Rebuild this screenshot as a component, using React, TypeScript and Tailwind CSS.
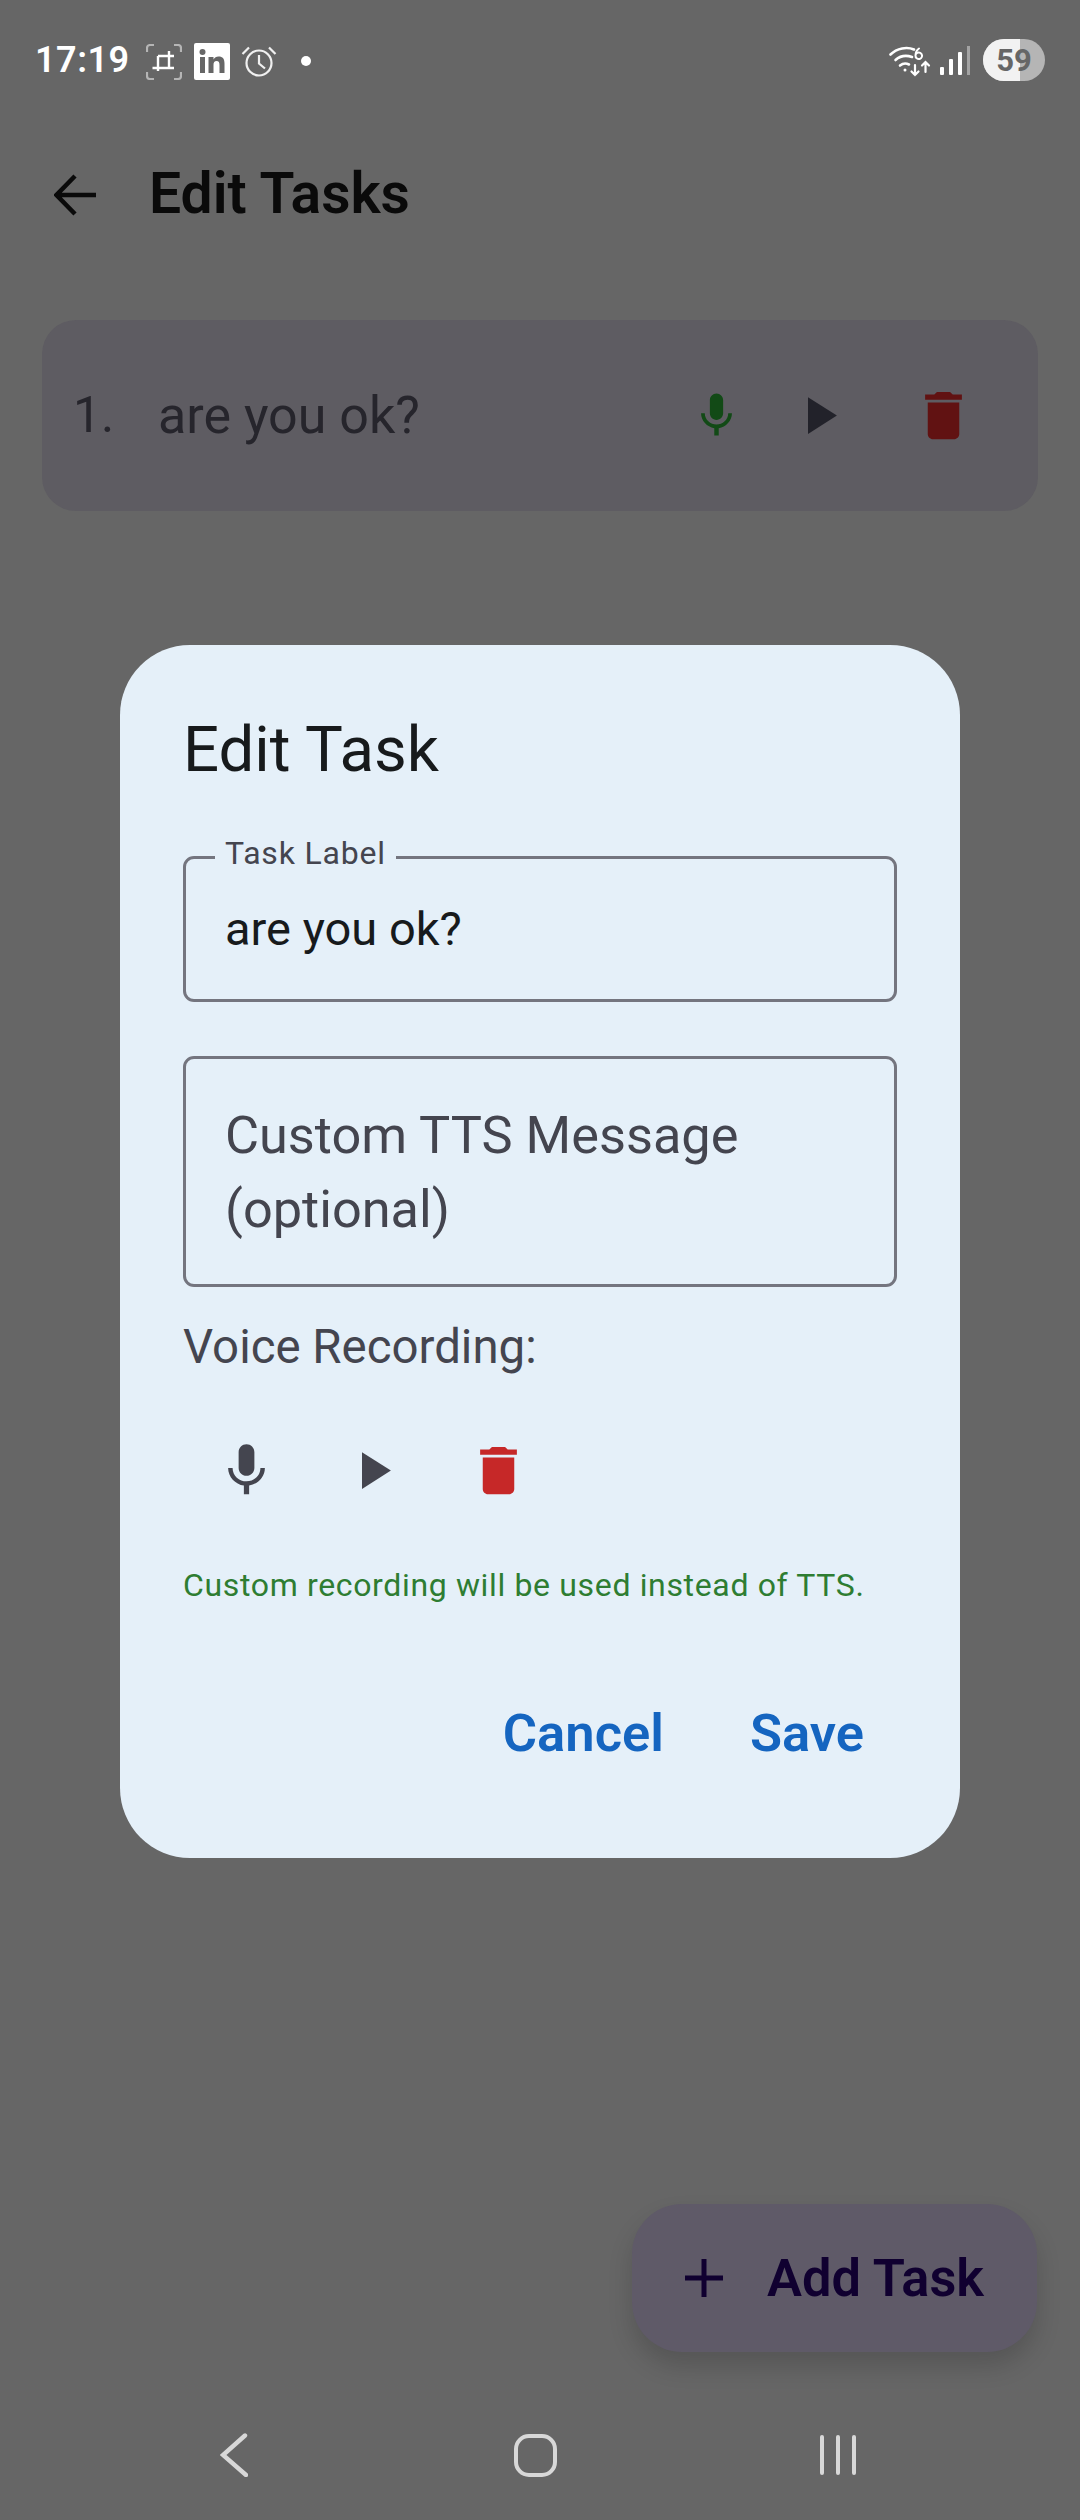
const F = { fontFamily: "Roboto, sans-serif" };

function Mic({ className }: { className: string }) {
  return (
    <svg viewBox="0 0 24 24" fill="currentColor" className={className}>
      <path d="M12 14c1.66 0 3-1.34 3-3V5c0-1.66-1.34-3-3-3S9 3.34 9 5v6c0 1.66 1.34 3 3 3zm5.3-3c0 3-2.54 5.1-5.3 5.1S6.7 14 6.7 11H5c0 3.41 2.72 6.23 6 6.72V21h2v-3.28c3.28-.48 6-3.3 6-6.72h-1.7z" />
    </svg>
  );
}
function Play({ className }: { className: string }) {
  return (
    <svg viewBox="0 0 24 24" fill="currentColor" className={className}>
      <path d="M8 5v14l11-7z" />
    </svg>
  );
}
function Trash({ className }: { className: string }) {
  return (
    <svg viewBox="0 0 24 24" fill="currentColor" className={className}>
      <path d="M6 19c0 1.1.9 2 2 2h8c1.1 0 2-.9 2-2V7H6v12zM19 4h-3.5l-1-1h-5l-1 1H5v2h14V4z" />
    </svg>
  );
}

function StatusBar() {
  return (
    <div className="h-[120px] flex items-start text-white shrink-0">
      <div className="ml-[35px] mt-[38px] w-[91px] text-[36px] leading-[44px] font-semibold tracking-[0.5px]">17:19</div>
      <svg viewBox="0 0 36 36" className="ml-[20px] mt-[44px] w-[36px] h-[36px]" fill="none">
        <path d="M1 8V4a3 3 0 0 1 3-3h4M28 1h4a3 3 0 0 1 3 3v4M35 28v4a3 3 0 0 1-3 3h-4M8 35H4a3 3 0 0 1-3-3v-4" stroke="#b5b5b5" strokeWidth="2.2" />
        <path d="M23 7v17M6.500 24H12M12 12v15M12 12h16M12 24h16" stroke="#fff" strokeWidth="2.400" />
      </svg>
      <svg viewBox="0 0 36 37" className="ml-[12px] mt-[43px] w-[36px] h-[37px]">
        <rect width="36" height="37" rx="2" fill="#fff" />
        <rect x="6" y="14" width="5" height="16" fill="#666" />
        <circle cx="8.5" cy="9" r="3" fill="#666" />
        <path d="M14.5 14h5v2.4c1-1.7 2.8-2.8 5-2.8 4.4 0 6 2.6 6 7V30h-5v-8c0-2.4-.7-4-2.9-4s-3.1 1.6-3.1 4v8h-5z" fill="#666" />
      </svg>
      <svg viewBox="0 0 36 32" className="ml-[11px] mt-[45px] w-[36px] h-[32px]" fill="none" stroke="#f0f0f0" strokeWidth="2.2">
        <circle cx="18" cy="18" r="12.5" />
        <path d="M18 10v8.5l6 5M1.5 9 8 2.5M34.500 9 28 2.500" />
      </svg>
      <div className="ml-[24px] mt-[56px] w-[10px] h-[10px] rounded-full bg-white" />
      <div className="ml-auto mt-[46px] flex items-start">
        <svg viewBox="0 0 42 31" className="w-[42px] h-[31px]" fill="none" stroke="#fff" strokeLinecap="round">
          <path d="M1.500 8.500C8 2 18 0.500 25 3.500" strokeWidth="2.600" />
          <path d="M6.500 14C11 10 17 9 23 11" strokeWidth="2.600" />
          <path d="M11 19.500c2.500-2 6-2.500 9-1" strokeWidth="2.600" />
          <circle cx="16" cy="24" r="1.500" fill="#fff" stroke="none" />
          <path d="M30 2.500c-3 2-3.500 4-3.500 7a3.300 3.300 0 1 0 .5-1.500" strokeWidth="2" />
          <path d="M26 19v10M22.500 25.500l3.500 3.500 3.500-3.500M36.500 26V16M33 19.500l3.500-3.500 3.500 3.500" strokeWidth="2.200" />
        </svg>
        <div className="ml-[9px] flex items-end h-[29px] gap-[5px]">
          <div className="w-[4px] h-[8px] rounded-[1px] bg-white" />
          <div className="w-[4px] h-[16px] rounded-[1px] bg-white" />
          <div className="w-[4px] h-[23px] rounded-[1px] bg-white" />
          <div className="w-[3px] h-[29px] bg-[#a3a3a3]" />
        </div>
        <div className="relative ml-[13px] mr-[35px] -mt-[7px] w-[62px] h-[42px] rounded-[21px] overflow-hidden bg-[#b5b5b5]">
          <div className="w-[37px] h-full bg-[#f2f2f2]" />
          <div className="absolute inset-0 flex items-center justify-center text-[31px] font-bold text-[#666666] leading-none">59</div>
        </div>
      </div>
    </div>
  );
}

function AppBar() {
  return (
    <div className="h-[148px] flex items-start shrink-0 text-[#0a0a0a]">
      <svg viewBox="0 0 42 42" className="ml-[54px] mt-[54px] w-[42px] h-[42px]" fill="none" stroke="currentColor" strokeWidth="4.500">
        <path d="M42 21H3M21 2 2.500 21 21 40" />
      </svg>
      <div className="ml-[53px] mt-[39px] text-[57px] leading-[70px] font-semibold">Edit Tasks</div>
    </div>
  );
}

function TaskCard() {
  return (
    <div className="mx-[42px] h-[191px] rounded-[34px] bg-[#5e5c62] flex items-center pl-[31px] shrink-0 text-[#26252c]">
      <span className="text-[50px] w-[85px]">1.</span>
      <span className="text-[52px]">are you ok?</span>
      <Mic className="ml-auto w-[53px] h-[53px] text-[#124a16]" />
      <Play className="ml-[44px] w-[63px] h-[63px] text-[#22222a]" />
      <Trash className="ml-[62px] mr-[63px] w-[63px] h-[63px] text-[#611212]" />
    </div>
  );
}

function Dialog() {
  return (
    <div className="absolute left-[120px] top-[645px] w-[840px] h-[1213px] rounded-[70px] bg-[#e5f0f9] px-[63px] flex flex-col">
      <div className="mt-[70px] text-[63.5px] leading-[70px] text-[#171a1c]">Edit Task</div>
      <div className="relative mt-[71px] h-[146px] rounded-[11px] border-[3px] border-[#74757f] flex items-center pl-[39px]">
        <div className="absolute left-[29px] -top-[25px] px-[10px] bg-[#e5f0f9] text-[32px] leading-[38px] tracking-[0.8px] text-[#44454f]">Task Label</div>
        <span className="text-[47px] text-[#171a1c]">are you ok?</span>
      </div>
      <div className="mt-[54px] h-[231px] rounded-[11px] border-[3px] border-[#74757f] flex items-center px-[39px] text-[52.3px] leading-[74px] text-[#44454f]">
        Custom TTS Message (optional)
      </div>
      <div className="mt-[30px] text-[47.4px] leading-[60px] text-[#44454f]">Voice Recording:</div>
      <div className="mt-[30px] flex">
        <div className="w-[126px] h-[126px] flex items-center justify-center"><Mic className="w-[63px] h-[63px] text-[#44454f]" /></div>
        <div className="w-[126px] h-[126px] flex items-center justify-center"><Play className="w-[63px] h-[63px] text-[#44454f]" /></div>
        <div className="w-[126px] h-[126px] flex items-center justify-center"><Trash className="w-[63px] h-[63px] text-[#c62828]" /></div>
      </div>
      <div className="mt-[30px] text-[32px] leading-[44px] tracking-[0.65px] text-[#2e7d32] whitespace-nowrap">Custom recording will be used instead of TTS.</div>
      <div className="mt-[96px] flex justify-end pr-[33px] text-[52.5px] leading-[60px] font-semibold text-[#1565c0]">
        <span>Cancel</span>
        <span className="ml-[86px]">Save</span>
      </div>
    </div>
  );
}

function Fab() {
  return (
    <div className="self-end mr-[43px] w-[405px] h-[148px] rounded-[50px] bg-[#5f5a68] shadow-[0_14px_24px_rgba(0,0,0,0.16)] flex items-center pl-[53px] text-[#100030] shrink-0">
      <svg viewBox="0 0 38 38" className="w-[38px] h-[38px]" fill="none" stroke="currentColor" strokeWidth="5">
        <path d="M19 0v38M0 19h38" />
      </svg>
      <span className="ml-[44px] text-[52.4px] font-semibold leading-[60px]">Add Task</span>
    </div>
  );
}

function NavBar() {
  return (
    <div className="mt-[60px] mb-[22px] h-[86px] shrink-0 flex items-center text-[#d8d8d8]">
      <svg viewBox="0 0 28 44" className="ml-[220px] w-[28px] h-[44px]" fill="none" stroke="currentColor" strokeWidth="4.400" strokeLinecap="round">
        <path d="M25 2.500 3 22l23 20" />
      </svg>
      <div className="ml-[266px] w-[43px] h-[43px] rounded-[15px] border-[4px] border-current" />
      <div className="ml-[263px] flex gap-[12px]">
        <div className="w-[4px] h-[40px] rounded-full bg-current" />
        <div className="w-[4px] h-[40px] rounded-full bg-current" />
        <div className="w-[4px] h-[40px] rounded-full bg-current" />
      </div>
    </div>
  );
}

export default function App() {
  return (
    <div style={F} className="relative w-[1080px] h-[2520px] bg-[#666666] overflow-hidden flex flex-col">
      <StatusBar />
      <AppBar />
      <div className="h-[52px] shrink-0" />
      <TaskCard />
      <div className="flex-1" />
      <Fab />
      <NavBar />
      <Dialog />
    </div>
  );
}
